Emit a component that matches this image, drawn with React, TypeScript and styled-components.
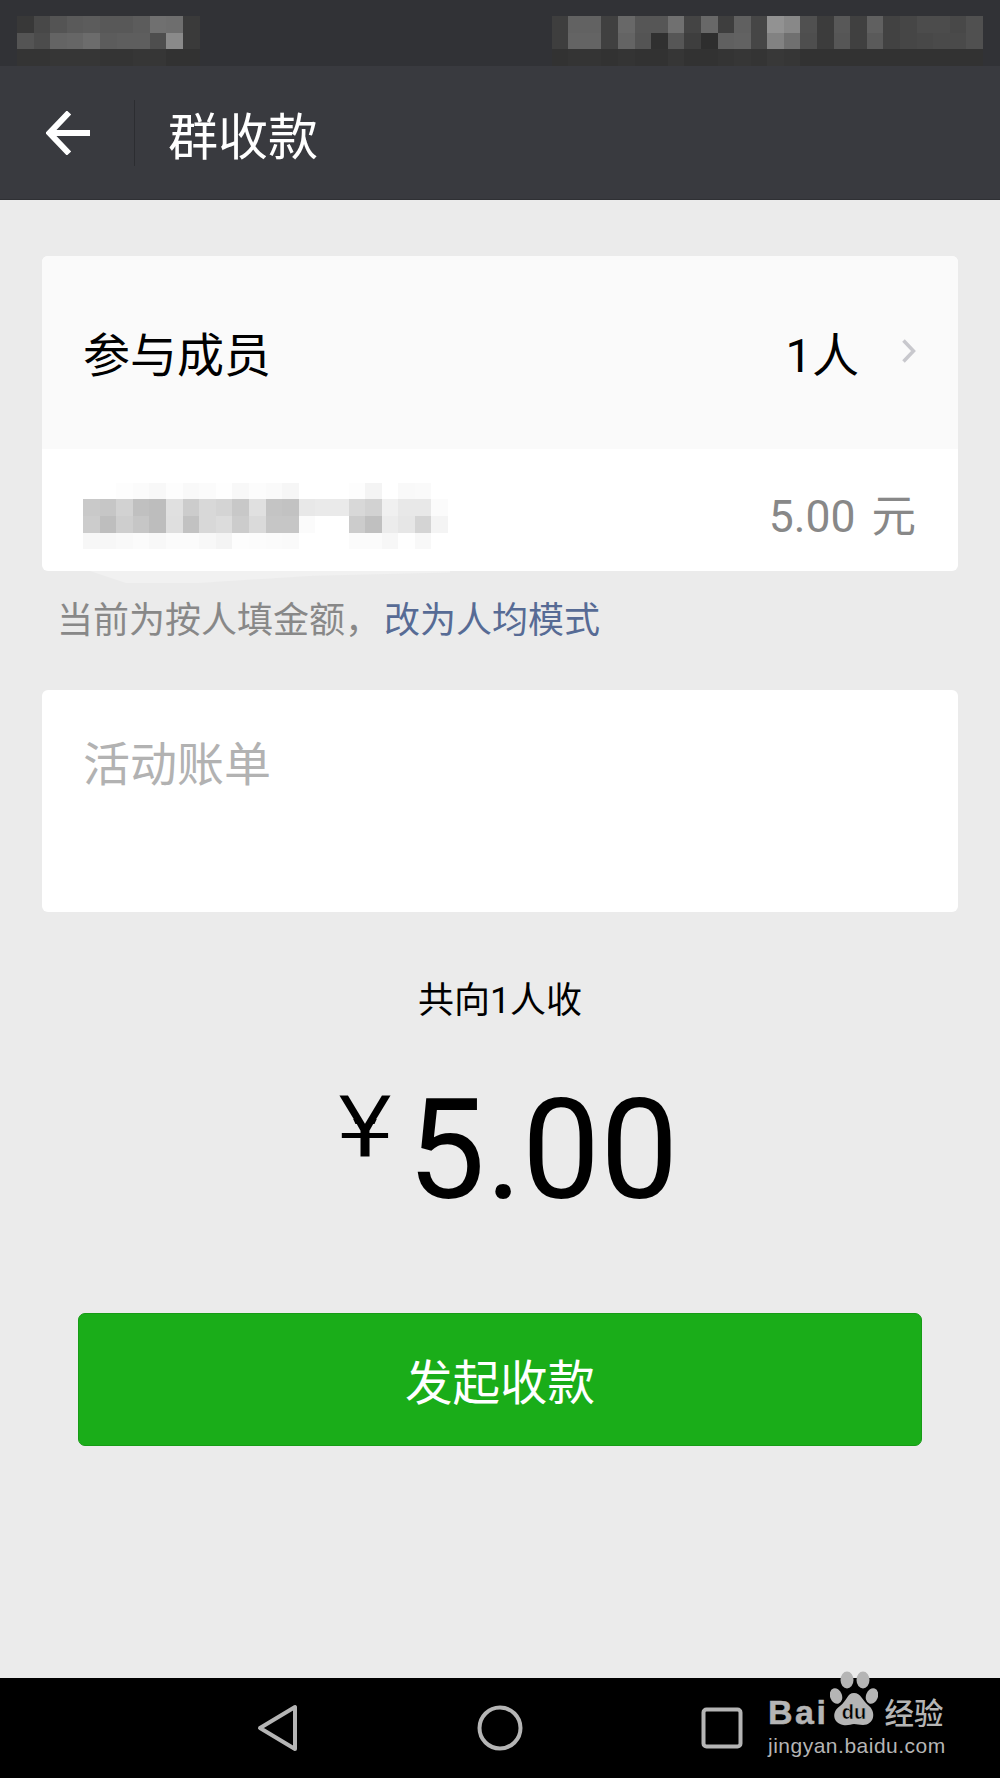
import React from 'react';
import styled, { createGlobalStyle } from 'styled-components';

const CJK = `Roboto, "Noto Sans CJK SC", sans-serif`;

const GlobalStyle = createGlobalStyle`
  html, body {
    margin: 0;
    padding: 0;
    background: #ebebeb;
    font-family: ${CJK};
  }
`;

const Page = styled.div`
  position: relative;
  display: flex;
  flex-direction: column;
  width: 1000px;
  height: 1778px;
  overflow: hidden;
`;

const StatusBar = styled.div`
  display: flex;
  justify-content: space-between;
  align-items: flex-start;
  height: 66px;
  padding: 16px 17px 0;
  box-sizing: border-box;
  background: #313236;
`;

const MosaicGrid = styled.div<{ $cols: number }>`
  display: grid;
  grid-template-columns: repeat(${p => p.$cols}, 16.6px);
  grid-auto-rows: 16.6px;
  flex-shrink: 0;
`;

const Cell = styled.span.attrs<{ $shade: number }>(p => ({
  style: { background: `rgb(${p.$shade},${p.$shade},${p.$shade})` },
}))``;

const Mosaic: React.FC<{ rows: number[][] }> = ({ rows }) => (
  <MosaicGrid $cols={rows[0].length}>
    {rows.flat().map((shade, i) => (
      <Cell key={i} $shade={shade} />
    ))}
  </MosaicGrid>
);

const Header = styled.header`
  display: flex;
  align-items: center;
  height: 134px;
  background: #393a3f;
  border-bottom: 1px solid #2f3034;
  box-sizing: border-box;
`;

const BackButton = styled.div`
  display: flex;
  justify-content: center;
  align-items: center;
  width: 135px;
  height: 66px;
  padding-left: 1px;
  border-right: 1px solid #2c2d31;
  box-sizing: border-box;
`;

const Title = styled.h1`
  margin: 0 0 0 33px;
  font-size: 50px;
  font-weight: 400;
  color: #fff;
`;

const Main = styled.main`
  flex: 1;
  display: flex;
  flex-direction: column;
  padding: 56px 42px 0;
`;

const Card = styled.section`
  position: relative;
  border-radius: 6px;
  background: #fff;
`;

const MemberRow = styled.div`
  display: flex;
  align-items: center;
  justify-content: space-between;
  height: 193px;
  padding: 0 41px 3px 41px;
  box-sizing: border-box;
  border-radius: 6px 6px 0 0;
  background: #fafafa;
  font-size: 47px;
  color: #000;
`;

const MemberCount = styled.div`
  display: flex;
  align-items: center;
  gap: 42px;
`;

const AmountRow = styled.div`
  display: flex;
  align-items: center;
  justify-content: space-between;
  height: 122px;
  padding: 12px 42px 0 41px;
  box-sizing: border-box;
`;

const AmountValue = styled.span`
  padding-bottom: 7px;
  font-size: 44.500px;
  color: #888;
  word-spacing: 5px;
`;

const Smear = styled.div`
  position: absolute;
  left: 48px;
  top: 315px;
  width: 360px;
  height: 12px;
  background: #f1f1f1;
  clip-path: polygon(0 0, 100% 0, 100% 12%, 62% 40%, 30% 100%, 10% 100%);
`;

const Note = styled.p`
  margin: 24px 0 0 15px;
  font-size: 36px;
  line-height: 52px;
  color: #888;
`;

const ModeLink = styled.span`
  margin-left: 3px;
  color: #576b95;
`;

const BillCard = styled(Card)`
  height: 222px;
  margin-top: 43px;
  padding: 50px 41px 0;
  box-sizing: border-box;
  font-size: 47px;
  line-height: 50px;
  color: #b2b2b2;
`;

const Total = styled.div`
  margin-top: 64px;
  text-align: center;
  font-size: 36px;
  line-height: 50px;
  color: #000;
`;

const AmountDisplay = styled.div`
  display: flex;
  justify-content: center;
  align-items: flex-start;
  gap: 13px;
  height: 140px;
  margin-top: 55px;
  padding-left: 14px;
  color: #000;
`;

const Yen = styled.span`
  position: relative;
  display: block;
  margin-top: 4px;
  font-family: "DejaVu Sans", sans-serif;
  font-size: 92px;
  line-height: 96px;
  transform: scaleY(0.91);
  transform-origin: top;

  /* the reference glyph has one bar: hide the upper bar either side of the arms */
  &::before,
  &::after {
    content: '';
    position: absolute;
    top: 36.500px;
    width: 17px;
    height: 9.500px;
    background: #ebebeb;
  }

  &::before {
    left: 4px;
    clip-path: polygon(0 0, 77% 0, 100% 100%, 0 100%);
  }

  &::after {
    left: 37.500px;
    clip-path: polygon(23% 0, 100% 0, 100% 100%, 0 100%);
  }
`;

const Sum = styled.span`
  font-size: 139px;
  line-height: 140px;
`;

const PayButton = styled.button`
  display: block;
  height: 133px;
  margin: 92px 36px 0;
  border: 1px solid #179b16;
  border-radius: 7px;
  background: #1aad19;
  color: #fff;
  font-family: ${CJK};
  font-size: 47.500px;
`;

const NavBar = styled.nav`
  position: relative;
  display: flex;
  align-items: center;
  height: 100px;
  padding-left: 257px;
  box-sizing: border-box;
  background: #000;
`;

const NavIcons = styled.div`
  display: flex;
  align-items: center;
  gap: 178px;
`;

const Watermark = styled.div`
  position: absolute;
  left: 768px;
  top: -7px;
  color: #b5b5b5;
`;

const BrandLine = styled.div`
  display: flex;
  align-items: flex-start;
  height: 62px;
`;

const BrandBai = styled.span`
  margin-top: 25px;
  font-family: "Liberation Sans", sans-serif;
  font-size: 34px;
  font-weight: 700;
  line-height: 32px;
  letter-spacing: 2.500px;
  -webkit-text-stroke: 0.500px #b5b5b5;
`;

const BrandJingyan = styled.span`
  margin: 20px 0 0 6px;
  font-family: "Noto Sans CJK SC", sans-serif;
  font-size: 29.500px;
  font-weight: 500;
  line-height: 40px;
  white-space: nowrap;
`;

const Paw = styled.svg`
  flex-shrink: 0;
  margin-left: 2px;
`;

const Domain = styled.div`
  font-family: "Liberation Sans", sans-serif;
  font-size: 21px;
  line-height: 26px;
  letter-spacing: 0.500px;
  white-space: nowrap;
`;

const statusLeft = [
  [56, 72, 84, 90, 92, 88, 88, 92, 112, 110, 58],
  [84, 76, 100, 102, 108, 92, 94, 94, 78, 138, 58],
  [52, 52, 54, 54, 54, 52, 52, 54, 54, 50, 50],
];

const statusRight = [
  [62, 98, 98, 64, 104, 86, 86, 112, 68, 104, 62, 96, 70, 146, 136, 80, 60, 88, 64, 96, 66, 70, 76, 76, 72, 80],
  [62, 100, 100, 64, 100, 84, 48, 86, 62, 46, 96, 98, 70, 130, 112, 78, 60, 86, 64, 90, 66, 70, 72, 74, 74, 80],
  [50, 52, 52, 50, 52, 50, 50, 54, 50, 50, 52, 54, 52, 56, 54, 50, 50, 50, 50, 50, 50, 50, 50, 50, 50, 50],
];

const memberName = [
  [255, 255, 253, 251, 248, 253, 249, 251, 254, 248, 252, 250, 246, 255, 255, 255, 253, 244, 255, 249, 250, 255],
  [201, 198, 210, 192, 189, 224, 204, 216, 212, 200, 224, 196, 194, 232, 234, 234, 216, 210, 240, 232, 232, 251],
  [204, 190, 206, 198, 189, 223, 194, 216, 220, 204, 218, 198, 198, 251, 255, 255, 204, 192, 236, 230, 212, 244],
  [247, 247, 249, 251, 248, 251, 251, 248, 244, 253, 252, 251, 250, 255, 255, 255, 251, 251, 247, 254, 248, 255],
];

const App: React.FC = () => (
  <Page>
    <GlobalStyle />
    <StatusBar>
      <Mosaic rows={statusLeft} />
      <Mosaic rows={statusRight} />
    </StatusBar>
    <Header>
      <BackButton>
        <svg width="44" height="44" viewBox="0 0 44 44" fill="none" stroke="#fff" strokeWidth="6">
          <path d="M44 22H4" />
          <path d="M23 1.500L3.500 22L23 42.500" />
        </svg>
      </BackButton>
      <Title>群收款</Title>
    </Header>
    <Main>
      <Card>
        <MemberRow>
          <span>参与成员</span>
          <MemberCount>
            <span>1人</span>
            <svg width="16" height="24" viewBox="0 0 16 24" fill="none" stroke="#c8c8cd" strokeWidth="3.500">
              <path d="M2.500 1.500L12.500 12L2.500 22.500" />
            </svg>
          </MemberCount>
        </MemberRow>
        <AmountRow>
          <Mosaic rows={memberName} />
          <AmountValue>5.00 元</AmountValue>
        </AmountRow>
        <Smear />
      </Card>
      <Note>
        当前为按人填金额，<ModeLink>改为人均模式</ModeLink>
      </Note>
      <BillCard>活动账单</BillCard>
      <Total>共向1人收</Total>
      <AmountDisplay>
        <Yen>¥</Yen>
        <Sum>5.00</Sum>
      </AmountDisplay>
      <PayButton>发起收款</PayButton>
    </Main>
    <NavBar>
      <NavIcons>
        <svg width="42" height="48" viewBox="0 0 42 48" fill="none" stroke="#b5b5b5" strokeWidth="4" strokeLinejoin="round">
          <path d="M38 3V45L3 24Z" />
        </svg>
        <svg width="46" height="46" viewBox="0 0 46 46" fill="none" stroke="#b5b5b5" strokeWidth="4">
          <circle cx="23" cy="23" r="20.500" />
        </svg>
        <svg width="42" height="42" viewBox="0 0 42 42" fill="none" stroke="#b5b5b5" strokeWidth="4">
          <rect x="2.500" y="2.500" width="37" height="37" rx="3" />
        </svg>
      </NavIcons>
      <Watermark>
        <BrandLine>
          <BrandBai>Bai</BrandBai>
          <Paw width="48" height="60" viewBox="0 0 48 60">
            <ellipse cx="17" cy="9" rx="6.500" ry="8.500" fill="#b5b5b5" />
            <ellipse cx="33" cy="9" rx="6.500" ry="8.500" fill="#b5b5b5" />
            <ellipse cx="6" cy="25" rx="6" ry="8" fill="#b5b5b5" transform="rotate(-20 6 25)" />
            <ellipse cx="42" cy="25" rx="6" ry="8" fill="#b5b5b5" transform="rotate(20 42 25)" />
            <path d="M24 22C31 22 32 29 38 34C47 41 44 54 33 54C29 54 27 53 24 53C21 53 18 55 13 54C3 52 1 41 10 35C17 30 17 22 24 22Z" fill="#b5b5b5" />
            <text x="24" y="48" textAnchor="middle" fontFamily="Liberation Sans" fontSize="20" fontWeight="700" fill="#000" stroke="#b5b5b5" strokeWidth="0.500">du</text>
          </Paw>
          <BrandJingyan>经验</BrandJingyan>
        </BrandLine>
        <Domain>jingyan.baidu.com</Domain>
      </Watermark>
    </NavBar>
  </Page>
);

export default App;
